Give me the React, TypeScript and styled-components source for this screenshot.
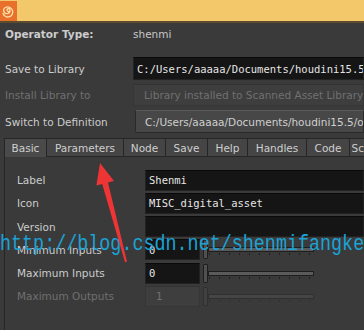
import styled, { createGlobalStyle } from 'styled-components'

const GlobalStyle = createGlobalStyle`
  html, body {
    margin: 0;
    padding: 0;
    background: #3a3a3a;
  }
  body {
    font-family: "DejaVu Sans", "Liberation Sans", sans-serif;
    font-size: 10.5px;
    color: #cfcfcf;
  }
`

const colors = {
  bg: '#3a3a3a',
  field: '#151515',
  label: '#cccccc',
  disabled: '#707070',
  border: '#262626',
  tab: '#454545',
}

const Page = styled.div`
  position: relative;
  width: 364px;
  height: 330px;
  overflow: hidden;
  background: ${colors.bg};
`

const TitleBar = styled.div`
  height: 21px;
  background: #f2c86b;
  border-bottom: 2px solid #5e4a2c;
  display: flex;
  align-items: center;
`

const Body = styled.div`
  display: flex;
  flex-direction: column;
  padding: 0 0 0 5px;
`

const Row = styled.div<{ $top: number; $height?: number }>`
  display: flex;
  align-items: center;
  margin-top: ${(p) => p.$top}px;
  height: ${(p) => p.$height ?? 22}px;
`

const RowLabel = styled.span<{ $bold?: boolean; $disabled?: boolean }>`
  width: 128px;
  flex: none;
  white-space: nowrap;
  font-weight: ${(p) => (p.$bold ? 'bold' : 'normal')};
  color: ${(p) => (p.$disabled ? colors.disabled : colors.label)};
`

const Value = styled.span`
  color: #c8c8c8;
`

const Field = styled.div<{ $disabled?: boolean; $width?: number }>`
  display: flex;
  align-items: center;
  box-sizing: border-box;
  height: 100%;
  ${(p) => (p.$width ? `width: ${p.$width}px; flex: none;` : 'flex: 1;')}
  white-space: nowrap;
  overflow: hidden;
  padding-left: ${(p) => (p.$disabled ? 10 : 3)}px;
  background: ${(p) => (p.$disabled ? '#3e3e3e' : colors.field)};
  border: 1px solid ${(p) => (p.$disabled ? '#363636' : '#222')};
  border-top-color: ${(p) => (p.$disabled ? '#333' : '#0a0a0a')};
  color: ${(p) => (p.$disabled ? colors.disabled : '#e6e6e6')};
  font-family: ${(p) =>
    p.$disabled ? '"DejaVu Sans", sans-serif' : '"DejaVu Sans Mono", "Liberation Mono", monospace'};
  font-size: 10.5px;
`

const PathButton = styled.div`
  flex: 1;
  height: 100%;
  box-sizing: border-box;
  display: flex;
  align-items: center;
  padding-left: 9px;
  white-space: nowrap;
  overflow: hidden;
  margin-left: 2px;
  background: #474747;
  border: 1px solid #2a2a2a;
  border-top-color: #5a5a5a;
  border-radius: 2px 0 0 2px;
  color: #cfcfcf;
`

const Tabs = styled.div`
  display: flex;
  margin-top: 5px;
  height: 19px;
  margin-left: -1px;
`

const Tab = styled.div<{ $active?: boolean; $width: number }>`
  display: flex;
  align-items: center;
  justify-content: center;
  flex: none;
  width: ${(p) => p.$width}px;
  box-sizing: border-box;
  height: 100%;
  background: ${(p) => (p.$active ? '#4a4a4a' : colors.tab)};
  border: 1px solid #262626;
  border-left: none;
  border-bottom: ${(p) => (p.$active ? 'none' : '1px solid #262626')};
  color: #cfcfcf;
  white-space: nowrap;
  &:first-child {
    border-left: 1px solid #262626;
  }
`

const Panel = styled.div`
  margin-left: -1px;
  border-left: 1px solid #262626;
  display: flex;
  flex-direction: column;
  gap: 2.3px;
  padding-left: 12px;
  padding-top: 12.5px;
  height: 200px;
`

const ParamRow = styled.div`
  display: flex;
  align-items: center;
  height: 21px;
  flex: none;
`

const ParamLabel = styled.span<{ $disabled?: boolean }>`
  width: 128px;
  flex: none;
  white-space: nowrap;
  color: ${(p) => (p.$disabled ? colors.disabled : colors.label)};
`

const Slider = styled.div<{ $disabled?: boolean }>`
  position: relative;
  display: flex;
  align-items: center;
  height: 100%;
  width: 111px;
  margin-left: 3px;
  flex: none;
  opacity: ${(p) => (p.$disabled ? 0.35 : 1)};
`

const Handle = styled.div`
  width: 5px;
  height: 19px;
  box-sizing: border-box;
  background: #505050;
  border: 1px solid #1e1e1e;
  border-radius: 1px;
  flex: none;
`

const Track = styled.div`
  position: relative;
  flex: 1;
  height: 3px;
  background: #5a5a5a;
  border: 1px solid #1e1e1e;
`

const Ticks = styled.div`
  position: absolute;
  left: 0;
  right: 0;
  top: 5px;
  height: 2px;
  background-image: repeating-linear-gradient(
    to right,
    #1e1e1e 0 1px,
    transparent 1px 10px
  );
`

const Watermark = styled.div`
  position: absolute;
  left: 0;
  top: 233px;
  font-family: "Liberation Mono", "DejaVu Sans Mono", monospace;
  font-size: 18.4px;
  line-height: 22px;
  color: #1aa3d6;
  white-space: nowrap;
  transform: scaleY(1.15);
  transform-origin: left top;
  pointer-events: none;
`

const ArrowLayer = styled.svg`
  position: absolute;
  left: 0;
  top: 0;
  pointer-events: none;
`

const HoudiniIcon = () => (
  <svg width="17" height="20" viewBox="0 0 17 20">
    <rect width="17" height="20" fill="#e8702a" />
    <path
      d="M8.5 10.5 a1.5 1.5 0 1 1 1.5 -1.5 a3.2 3.2 0 1 1 -4.5 -2.5 a5 5 0 1 1 -2.5 6"
      fill="none"
      stroke="#fbe0a8"
      strokeWidth="1.3"
      strokeLinecap="round"
    />
  </svg>
)

const tabs = ['Basic', 'Parameters', 'Node', 'Save', 'Help', 'Handles', 'Code', 'Scripts']
const tabWidths = [43, 77, 42, 42, 40, 59, 43, 40]

const SliderBar = ({ disabled }: { disabled?: boolean }) => (
  <Slider $disabled={disabled}>
    <Handle />
    <Track>
      <Ticks />
    </Track>
  </Slider>
)

export default function App() {
  return (
    <Page>
      <GlobalStyle />
      <TitleBar>
        <HoudiniIcon />
      </TitleBar>
      <Body>
        <Row $top={0} $height={21}>
          <RowLabel $bold>Operator Type:</RowLabel>
          <Value>shenmi</Value>
        </Row>
        <Row $top={13} $height={23}>
          <RowLabel>Save to Library</RowLabel>
          <Field>C:/Users/aaaaa/Documents/houdini15.5/otls/shenmi.hda</Field>
        </Row>
        <Row $top={4} $height={22}>
          <RowLabel $disabled>Install Library to</RowLabel>
          <Field $disabled>Library installed to Scanned Asset Library Directories</Field>
        </Row>
        <Row $top={4} $height={23}>
          <RowLabel>Switch to Definition</RowLabel>
          <PathButton>C:/Users/aaaaa/Documents/houdini15.5/otls/shenmi.hda</PathButton>
        </Row>
        <Tabs>
          {tabs.map((t, i) => (
            <Tab key={t} $active={i === 0} $width={tabWidths[i]}>
              {t}
            </Tab>
          ))}
        </Tabs>
        <Panel>
          <ParamRow>
            <ParamLabel>Label</ParamLabel>
            <Field>Shenmi</Field>
          </ParamRow>
          <ParamRow>
            <ParamLabel>Icon</ParamLabel>
            <Field>MISC_digital_asset</Field>
          </ParamRow>
          <ParamRow>
            <ParamLabel>Version</ParamLabel>
            <Field />
          </ParamRow>
          <ParamRow>
            <ParamLabel>Minimum Inputs</ParamLabel>
            <Field $width={55}>0</Field>
            <SliderBar />
          </ParamRow>
          <ParamRow>
            <ParamLabel>Maximum Inputs</ParamLabel>
            <Field $width={55}>0</Field>
            <SliderBar />
          </ParamRow>
          <ParamRow>
            <ParamLabel $disabled>Maximum Outputs</ParamLabel>
            <Field $width={55} $disabled>
              1
            </Field>
            <SliderBar disabled />
          </ParamRow>
        </Panel>
      </Body>
      <Watermark>http://blog.csdn.net/shenmifangke</Watermark>
      <ArrowLayer width="364" height="330" viewBox="0 0 364 330">
        <polygon
          points="100,163 114,181 108,182.5 127,261.7 125,262.3 102.2,184 96.4,185.6"
          fill="#ee3434"
        />
      </ArrowLayer>
    </Page>
  )
}
